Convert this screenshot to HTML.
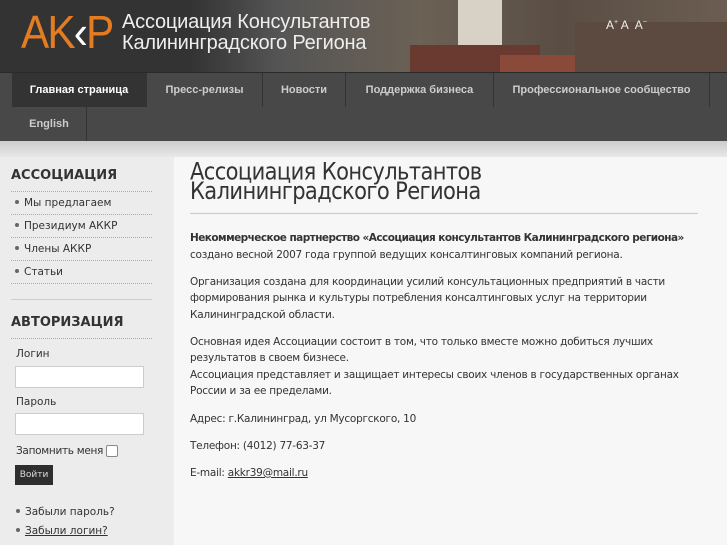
<!DOCTYPE html>
<html><head><meta charset="utf-8"><style>
*{margin:0;padding:0;box-sizing:border-box}
body{width:727px;height:545px;overflow:hidden;background:#f7f7f7;font-family:"DejaVu Sans",sans-serif;font-size:10.5px;color:#333;position:relative}
#hdr{position:absolute;left:0;top:0;width:727px;height:72px;background:linear-gradient(90deg,#333 0,#333 190px,#555 280px,#6b6155 420px,#5a4e44 560px,#6b5d52 727px)}
.tower{position:absolute;left:458px;top:0;width:44px;height:72px;background:#d8d2c6}
.roof{position:absolute;top:45px;height:27px;background:#6a3a30}
.bld{position:absolute;left:575px;top:22px;width:152px;height:50px;background:#5c4a40}
#logo{position:absolute;left:21px;top:9px;font-family:"Liberation Sans",sans-serif;font-size:46px;color:#e47d22;letter-spacing:-2px;line-height:46px;transform:scaleX(.92);transform-origin:left}
#lt{position:absolute;left:122px;top:12px;font-family:"Liberation Sans",sans-serif;font-size:20px;line-height:21px;color:#eee;letter-spacing:-.2px}
#fs{position:absolute;left:606px;top:18px;color:#eee;font-size:12px;font-family:"Liberation Sans",sans-serif}
#nav{position:absolute;left:0;top:72px;width:727px;height:69px;background:#484848;border-top:1px solid #2a2a2a}
#nav a{position:absolute;height:34px;line-height:34px;color:#ccc;font-weight:bold;font-family:"Liberation Sans",sans-serif;font-size:11px;text-align:center;border-right:1px solid #333;text-decoration:none}
#strip{position:absolute;left:0;top:141px;width:727px;height:16px;background:linear-gradient(#ccc,#e8e8e8)}
#side{position:absolute;left:0;top:157px;width:174px;height:388px;background:#ececec}
#side h3{position:absolute;left:11px;font-size:13px;font-weight:bold;color:#333;letter-spacing:0}
.li{position:absolute;left:11px;width:141px;height:23px;line-height:23px;border-bottom:1px dotted #aaa;font-size:10.5px;color:#333;padding-left:4px}
.dot{display:inline-block;width:4px;height:4px;border-radius:2px;background:#666;margin-right:5px;vertical-align:2px}
input.t{position:absolute;left:15px;width:129px;height:22px;border:1px solid #ccc;background:#fff}
#main{position:absolute;left:190px;top:160px;width:520px}
h1{font-size:21px;line-height:17px;font-weight:normal;color:#333;letter-spacing:-.6px;padding-top:2px;padding-bottom:10px;border-bottom:1px solid #ccc;transform:scaleY(1.15);transform-origin:top;width:508px}
p{line-height:16.5px;margin-bottom:10.7px;letter-spacing:-.25px;white-space:nowrap}
b{letter-spacing:-.55px}
</style></head><body>
<div id="hdr"><div class="tower"></div><div class="roof" style="left:410px;width:130px"></div><div class="roof" style="left:500px;width:80px;top:55px;background:#8a4a3a"></div><div class="bld"></div></div>
<div id="logo">AK<span style="color:#fff">‹</span>P</div>
<div id="lt">Ассоциация Консультантов<br>Калининградского Региона</div>
<div id="fs">A<sup style="font-size:7px">+</sup> A &nbsp;A<sup style="font-size:7px">−</sup></div>
<div id="nav">
<a style="left:12px;top:0;width:135px;background:#333;color:#fff">Главная страница</a>
<a style="left:147px;top:0;width:116px">Пресс-релизы</a>
<a style="left:263px;top:0;width:83px">Новости</a>
<a style="left:346px;top:0;width:148px">Поддержка бизнеса</a>
<a style="left:494px;top:0;width:216px">Профессиональное сообщество</a>
<a style="left:12px;top:34px;width:75px">English</a>
</div>
<div id="strip"></div>
<div id="side">
<h3 style="top:11px">АССОЦИАЦИЯ</h3>
<div style="position:absolute;left:11px;top:34px;width:141px;border-top:1px dotted #aaa"></div>
<div class="li" style="top:35px"><span class="dot"></span>Мы предлагаем</div>
<div class="li" style="top:58px"><span class="dot"></span>Президиум АККР</div>
<div class="li" style="top:81px"><span class="dot"></span>Члены АККР</div>
<div class="li" style="top:104px"><span class="dot"></span>Статьи</div>
<div style="position:absolute;left:11px;top:142px;width:141px;border-top:1px solid #ccc"></div>
<h3 style="top:158px">АВТОРИЗАЦИЯ</h3>
<div style="position:absolute;left:11px;top:181px;width:141px;border-top:1px dotted #aaa"></div>
<div style="position:absolute;left:16px;top:191px">Логин</div>
<input class="t" style="top:209px">
<div style="position:absolute;left:16px;top:239px">Пароль</div>
<input class="t" style="top:256px">
<div style="position:absolute;left:16px;top:288px;letter-spacing:-.3px">Запомнить меня</div>
<div style="position:absolute;left:106px;top:288px;width:12px;height:12px;border:1px solid #888;background:#fff;border-radius:2px"></div>
<div style="position:absolute;left:15px;top:308px;width:38px;height:20px;background:#2e2e2e;color:#ddd;font-size:9px;line-height:20px;text-align:center">Войти</div>
<div style="position:absolute;left:16px;top:349px"><span class="dot"></span>Забыли пароль?</div>
<div style="position:absolute;left:16px;top:368px"><span class="dot"></span><u>Забыли логин?</u></div>
</div>
<div id="main">
<h1>Ассоциация Консультантов<br>Калининградского Региона</h1>
<div style="height:23px"></div>
<p><b>Некоммерческое партнерство «Ассоциация консультантов Калининградского региона»</b><br>создано весной 2007 года группой ведущих консалтинговых компаний региона.</p>
<p>Организация создана для координации усилий консультационных предприятий в части<br>формирования рынка и культуры потребления консалтинговых услуг на территории<br>Калининградской области.</p>
<p>Основная идея Ассоциации состоит в том, что только вместе можно добиться лучших<br>результатов в своем бизнесе.<br>Ассоциация представляет и защищает интересы своих членов в государственных органах<br>России и за ее пределами.</p>
<p>Адрес: г.Калининград, ул Мусоргского, 10</p>
<p>Телефон: (4012) 77-63-37</p>
<p>E-mail: <u>akkr39@mail.ru</u></p>
</div>
</body></html>
